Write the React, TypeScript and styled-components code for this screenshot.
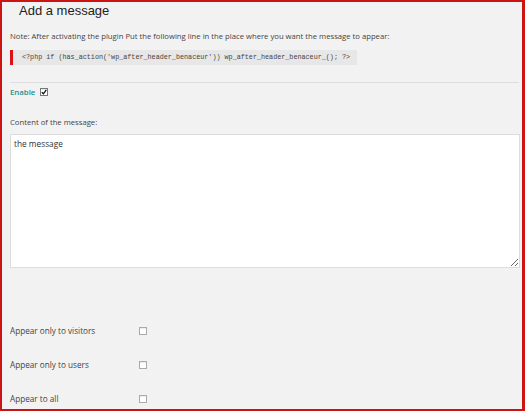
import { Fragment } from "react";
import styled, { createGlobalStyle } from "styled-components";

const GlobalStyle = createGlobalStyle`
  html, body {
    margin: 0;
    padding: 0;
    background: #f2f2f2;
  }
  * {
    box-sizing: border-box;
  }
`;

const Frame = styled.div`
  width: 525px;
  height: 411px;
  overflow: hidden;
  background: #f2f2f2;
  border: 2px solid #cc1414;
  border-right-width: 3px;
  padding: 0 3px 0 8px;
  font-family: "Open Sans", "Liberation Sans", sans-serif;
  color: #444;
`;

const Title = styled.h2`
  margin: 0;
  padding: 1px 0 0 9px;
  font-family: "Liberation Sans", Arial, sans-serif;
  font-weight: 400;
  font-size: 13px;
  line-height: 15px;
  color: #222;
`;

const Note = styled.p`
  margin: 12px 0 0;
  font-size: 7.7px;
  line-height: 12px;
  color: #444;
`;

const Code = styled.code`
  display: inline-block;
  margin-top: 4px;
  padding: 0 7px 0 9px;
  height: 15px;
  line-height: 15px;
  background: #e7e7e7;
  border-left: 3px solid #d11;
  font-family: "Liberation Mono", "DejaVu Sans Mono", monospace;
  font-size: 6.75px;
  color: #444;
  white-space: pre;
`;

const Divider = styled.hr`
  margin: 17px 0 0;
  border: 0;
  border-top: 1px solid #dedede;
`;

const EnableRow = styled.div`
  display: flex;
  align-items: center;
  gap: 5px;
  margin-top: 4px;
  height: 10px;
`;

const EnableLabel = styled.span`
  font-size: 7.8px;
  font-weight: 600;
  color: #238f8a;
`;

const Box = styled.span<{ $checked?: boolean }>`
  display: inline-flex;
  align-items: center;
  justify-content: center;
  width: 8px;
  height: 8px;
  background: #fff;
  border: 1px solid ${(p) => (p.$checked ? "#777" : "#aaa")};
  box-shadow: inset 0 1px 1px rgba(0, 0, 0, 0.08);
`;

const FieldLabel = styled.div`
  margin-top: 19px;
  font-size: 7.7px;
  line-height: 12px;
  color: #444;
`;

const Message = styled.textarea`
  display: block;
  width: 510px;
  height: 134px;
  margin-top: 6px;
  padding: 2px 3px;
  background: #fff;
  border: 1px solid #dcdcdc;
  font-family: "Open Sans", "Liberation Sans", sans-serif;
  font-size: 8.3px;
  line-height: 13px;
  color: #333;
  outline: none;
`;

const Options = styled.div`
  display: grid;
  grid-template-columns: 129px auto;
  row-gap: 24px;
  margin-top: 58px;
  font-size: 8.2px;
`;

const OptionLabel = styled.span`
  height: 10px;
  line-height: 10px;
  color: #444;
`;

const OptionCell = styled.span`
  display: flex;
  align-items: center;
  height: 10px;
`;

const CheckMark = () => (
  <svg width="6" height="6" viewBox="0 0 6 6">
    <path d="M0.8 3.2 L2.4 4.8 L5.3 0.9" fill="none" stroke="#111" strokeWidth="1.3" />
  </svg>
);

const audiences = ["Appear only to visitors", "Appear only to users", "Appear to all"];

export default function App() {
  return (
    <>
      <GlobalStyle />
      <Frame>
        <Title>Add a message</Title>
        <Note>
          Note: After activating the plugin Put the following line in the place where you want the
          message to appear:
        </Note>
        <Code>{"<?php if (has_action('wp_after_header_benaceur')) wp_after_header_benaceur_(); ?>"}</Code>
        <Divider />
        <EnableRow>
          <EnableLabel>Enable</EnableLabel>
          <Box $checked>
            <CheckMark />
          </Box>
        </EnableRow>
        <FieldLabel>Content of the message:</FieldLabel>
        <Message defaultValue="the message" />
        <Options>
          {audiences.map((label) => (
            <Fragment key={label}>
              <OptionLabel>{label}</OptionLabel>
              <OptionCell>
                <Box />
              </OptionCell>
            </Fragment>
          ))}
        </Options>
      </Frame>
    </>
  );
}
